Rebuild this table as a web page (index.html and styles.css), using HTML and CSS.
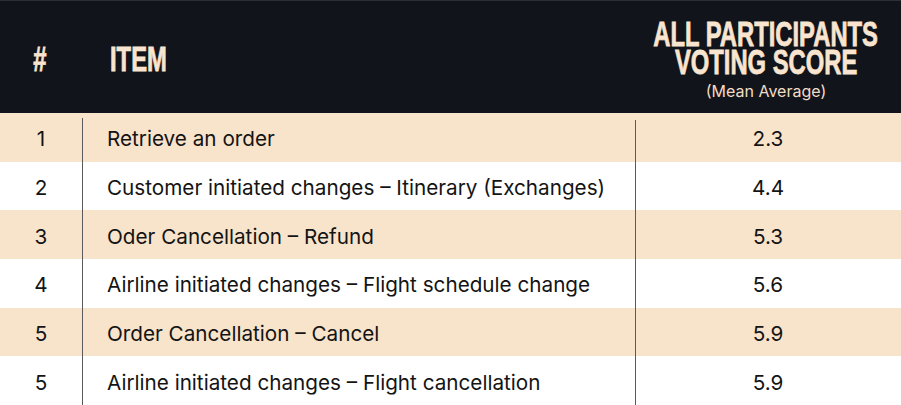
FILE: index.html
```html
<!DOCTYPE html>
<html>
<head>
<meta charset="utf-8">
<link rel="stylesheet" href="styles.css">
</head>
<body>
<div class="table">
  <div class="head num"><span class="hd">#</span></div>
  <div class="head item"><span class="hd">ITEM</span></div>
  <div class="head score">
    <span class="hd">ALL PARTICIPANTS</span>
    <span class="hd">VOTING SCORE</span>
    <span class="sub">(Mean Average)</span>
  </div>

  <div class="cell num odd first">1</div>
  <div class="cell item odd first">Retrieve an order</div>
  <div class="cell score odd first">2.3</div>

  <div class="cell num">2</div>
  <div class="cell item">Customer initiated changes – Itinerary (Exchanges)</div>
  <div class="cell score">4.4</div>

  <div class="cell num odd">3</div>
  <div class="cell item odd">Oder Cancellation – Refund</div>
  <div class="cell score odd">5.3</div>

  <div class="cell num">4</div>
  <div class="cell item">Airline initiated changes – Flight schedule change</div>
  <div class="cell score">5.6</div>

  <div class="cell num odd">5</div>
  <div class="cell item odd">Order Cancellation – Cancel</div>
  <div class="cell score odd">5.9</div>

  <div class="cell num">5</div>
  <div class="cell item">Airline initiated changes – Flight cancellation</div>
  <div class="cell score">5.9</div>
</div>
</body>
</html>
```

FILE: styles.css
```css
html, body {
  margin: 0;
  padding: 0;
  background: #ffffff;
}

.table {
  width: 901px;
  height: 405px;
  display: grid;
  grid-template-columns: 82px 553px minmax(0, 1fr);
  grid-template-rows: 113px repeat(6, 1fr);
  font-family: "Inter", "Lato", sans-serif;
  color: #141414;
  overflow: hidden;
}

.head {
  background: #12141b;
  border-top: 1px solid #2c2e33;
  color: #f9e5cf;
  display: flex;
  flex-direction: column;
  justify-content: center;
  white-space: nowrap;
  min-width: 0;
}

.head.num {
  align-items: center;
  padding-top: 4px;
  padding-right: 2px;
}

.head.item {
  align-items: flex-start;
  padding-left: 28px;
  padding-top: 4px;
}

.head.score {
  align-items: center;
  padding-top: 5px;
  padding-right: 4px;
}

.hd {
  display: inline-block;
  font-family: "Liberation Sans", "Arial", sans-serif;
  font-weight: 700;
  font-size: 35.5px;
  line-height: 28.5px;
  transform: scaleX(0.67);
  -webkit-text-stroke: 0.8px #f9e5cf;
}

.head.item .hd {
  transform-origin: left center;
}

.sub {
  font-family: "Inter", "Lato", sans-serif;
  font-size: 16px;
  line-height: 18px;
  margin-top: 5px;
  color: #f0dcc6;
}

.cell {
  display: flex;
  align-items: center;
  font-size: 20.7px;
  padding-top: 3px;
  white-space: nowrap;
  min-width: 0;
}

.cell.odd {
  background-color: #f8e3cb;
}

.cell.num {
  justify-content: center;
}

.cell.item {
  padding-left: 25px;
  background-image: linear-gradient(#5a5a5a, #5a5a5a);
  background-repeat: no-repeat;
  background-size: 1px 100%;
  background-position: left top;
}

.cell.score {
  justify-content: center;
  background-image: linear-gradient(#5a5a5a, #5a5a5a);
  background-repeat: no-repeat;
  background-size: 1px 100%;
  background-position: left top;
}

.cell.item.first {
  background-size: 1px calc(100% - 5px);
  background-position: left bottom;
}

.cell.score.first {
  background-size: 1px calc(100% - 7px);
  background-position: left bottom;
}
```
